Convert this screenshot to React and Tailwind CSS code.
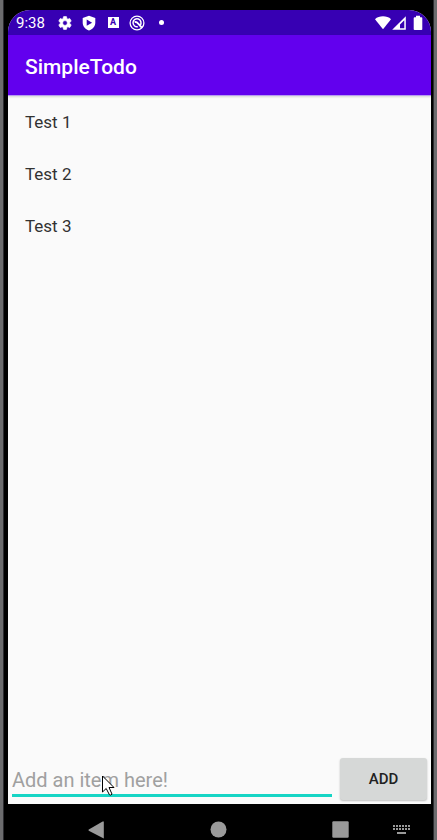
import React from "react";

const todos = ["Test 1", "Test 2", "Test 3"];

function StatusBar() {
  return (
    <div className="flex h-[25px] items-center bg-[#3700b3] pr-2 pl-2 text-white">
      <span className="w-[41px] text-[15px] leading-6">9:38</span>
      <div className="flex flex-1 items-center gap-2">
        <svg className="h-4 w-4" viewBox="0 0 24 24" fill="currentColor" aria-hidden="true">
          <path d="M19.14 12.94c.04-.3.06-.61.06-.94 0-.32-.02-.64-.07-.94l2.03-1.58a.49.49 0 0 0 .12-.61l-1.92-3.32a.488.488 0 0 0-.59-.22l-2.39.96c-.5-.38-1.03-.7-1.62-.94l-.36-2.54a.484.484 0 0 0-.48-.41h-3.84c-.24 0-.43.17-.47.41l-.36 2.54c-.59.24-1.13.57-1.62.94l-2.39-.96c-.22-.08-.47 0-.59.22L2.74 8.87c-.12.21-.08.47.12.61l2.03 1.58c-.05.3-.09.63-.09.94s.02.64.07.94l-2.03 1.58a.49.49 0 0 0-.12.61l1.92 3.32c.12.22.37.29.59.22l2.39-.96c.5.38 1.03.7 1.62.94l.36 2.54c.05.24.24.41.48.41h3.84c.24 0 .44-.17.47-.41l.36-2.54c.59-.24 1.13-.56 1.62-.94l2.39.96c.22.08.47 0 .59-.22l1.92-3.32c.12-.22.07-.47-.12-.61l-2.01-1.58zM12 15.600a3.600 3.600 0 1 1 0-7.200 3.600 3.600 0 0 1 0 7.200z" stroke="currentColor" strokeWidth="1" />
        </svg>
        <svg className="h-4 w-4" viewBox="0 0 16 16" fill="currentColor" aria-hidden="true">
          <path fillRule="evenodd" d="M8 .7 14.300 3v4.700c0 3.700-2.600 6.500-6.300 7.800-3.700-1.300-6.300-4.100-6.300-7.800V3zM5.700 4.600v6.200L11.100 7.700z" />
        </svg>
        <span className="flex w-4 justify-center">
          <span className="flex h-[11px] w-[11px] items-center justify-center bg-white text-[9px] leading-none font-bold text-[#3700b3]">
            A
          </span>
        </span>
        <svg className="h-4 w-4" viewBox="0 0 16 16" fill="none" stroke="currentColor" aria-hidden="true">
          <circle cx="8" cy="8" r="6.900" strokeWidth="1.300" />
          <path d="M11.200 10.200A4 4 0 1 0 8.800 11.700" strokeWidth="1.500" />
          <path d="M5.600 7.200Q7.500 6.500 9 8.300L13 12.800" strokeWidth="1.900" />
        </svg>
        <span className="flex w-4 justify-center">
          <span className="h-[5px] w-[5px] rounded-full bg-white" />
        </span>
      </div>
      <svg className="h-4 w-4" viewBox="0 0 16 16" fill="currentColor" aria-hidden="true">
        <path d="M0 4.200C2 2.200 5 1.300 8 1.300s6 .9 8 2.900L8 14.200z" />
      </svg>
      <svg className="ml-px h-4 w-[14px]" viewBox="0 0 14 16" fill="currentColor" aria-hidden="true">
        <path fillRule="evenodd" d="M13.800 1.200v13.600H.2zM12.300 5.200 8 9.600v3.700h4.300z" />
      </svg>
      <svg className="ml-[7px] h-4 w-[10px]" viewBox="0 0 10 16" fill="currentColor" aria-hidden="true">
        <path d="M3 .8h4v1.400h1.300q1 0 1 1v11q0 .8-1 .8H1.700q-1 0-1-.8v-11q0-1 1-1H3z" />
      </svg>
    </div>
  );
}

function NavigationBar() {
  return (
    <nav className="flex h-9 shrink-0 items-center bg-black pt-4 pr-[21px] pb-px pl-20 text-[#9a9a9a]">
      <div className="flex flex-1 items-center justify-between">
        <button type="button" aria-label="Back">
          <svg className="block h-[18px] w-[17px]" viewBox="0 0 17 18" fill="currentColor">
            <path d="M15.800.4v17.200L.8 9.700Q0 9.100.8 8.500L14.600.5z" />
          </svg>
        </button>
        <button type="button" aria-label="Home">
          <svg className="block h-[17px] w-[17px]" viewBox="0 0 17 17" fill="currentColor">
            <circle cx="8.500" cy="8.500" r="8" />
          </svg>
        </button>
        <button type="button" aria-label="Recent apps">
          <svg className="block h-[17px] w-[17px]" viewBox="0 0 17 17" fill="currentColor">
            <rect x=".3" y=".3" width="16.400" height="16.400" rx="1.200" />
          </svg>
        </button>
      </div>
      <button type="button" aria-label="Switch keyboard" className="ml-11">
        <svg className="block h-[11px] w-[17px]" viewBox="0 0 17 11" fill="currentColor">
          {[0, 3, 6, 9, 12, 15].map((x) => (
            <React.Fragment key={x}>
              <rect x={x} y="1" width="2" height="2" />
              <rect x={x} y="4" width="2" height="2" />
            </React.Fragment>
          ))}
          <rect x="4" y="8" width="9" height="2" />
        </svg>
      </button>
    </nav>
  );
}

export default function App() {
  return (
    <div className="flex min-h-screen flex-col border-r-[3px] border-l-[3px] border-[#6c6c6e] bg-black font-[Roboto,sans-serif]">
      <div className="flex flex-1 flex-col border-r border-l border-[#2c2c30] pt-[10px] pr-[2px] pl-1">
        <div className="flex flex-1 flex-col overflow-hidden rounded-t-[22px] bg-[#fafafa]">
          <StatusBar />
          <header className="flex h-[61px] items-center border-b border-[#b79bf0] bg-[#6200ee] px-[17px] pt-1 text-white shadow-[0_1px_2px_rgba(0,0,0,0.15)]">
            <h1 className="text-[21px] leading-7 font-medium">SimpleTodo</h1>
          </header>
          <ul className="flex-1 px-[17px]">
            {todos.map((todo) => (
              <li key={todo} className="flex h-[52px] items-center text-[17px] leading-6 text-[#323232]">
                {todo}
              </li>
            ))}
          </ul>
          <form className="flex items-end pr-1 pb-1 pl-1" onSubmit={(e) => e.preventDefault()}>
            <div className="relative mr-2 mb-[3px] flex-1">
              <input
                type="text"
                aria-label="New item"
                placeholder="Add an item here!"
                className="block h-9 w-full border-b-[3px] border-[#16d5c5] bg-transparent pt-1 text-[20px] leading-6 text-[#323232] outline-none placeholder:text-[#a0a0a0]"
              />
              <svg className="absolute top-[14px] left-[90px] h-[21px] w-[13px]" viewBox="0 0 13 21" aria-hidden="true">
                <path d="M.5 1v16l3.700-3.500 3.200 6.200q1.200 1 2.600-.6L7 12.500h5z" fill="#fff" stroke="#000" />
              </svg>
            </div>
            <button
              type="submit"
              className="h-[42px] w-[87px] rounded-[3px] bg-[#d6d8d7] text-[15px] leading-5 font-medium text-[#222] shadow-[0_1px_2px_rgba(0,0,0,0.25)]"
            >
              ADD
            </button>
          </form>
        </div>
        <NavigationBar />
      </div>
    </div>
  );
}
